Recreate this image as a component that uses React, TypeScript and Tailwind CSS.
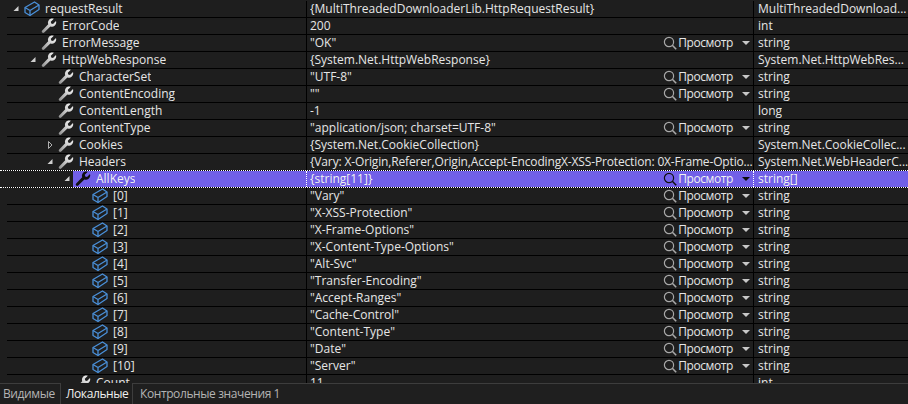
const FONT = "font-['Open_Sans','Noto_Sans',sans-serif]";

type Row = {
  name: string;
  value: string;
  type: string;
  depth: number;
  icon: "box" | "wrench";
  toggle?: "open" | "closed";
  view?: boolean;
  selected?: boolean;
  tight?: boolean;
};

const rows: Row[] = [
  { name: "requestResult", value: "{MultiThreadedDownloaderLib.HttpRequestResult}", type: "MultiThreadedDownload...", depth: 0, icon: "box", toggle: "open" },
  { name: "ErrorCode", value: "200", type: "int", depth: 1, icon: "wrench" },
  { name: "ErrorMessage", value: '"OK"', type: "string", depth: 1, icon: "wrench", view: true },
  { name: "HttpWebResponse", value: "{System.Net.HttpWebResponse}", type: "System.Net.HttpWebRes...", depth: 1, icon: "wrench", toggle: "open" },
  { name: "CharacterSet", value: '"UTF-8"', type: "string", depth: 2, icon: "wrench", view: true },
  { name: "ContentEncoding", value: '""', type: "string", depth: 2, icon: "wrench", view: true },
  { name: "ContentLength", value: "-1", type: "long", depth: 2, icon: "wrench" },
  { name: "ContentType", value: '"application/json; charset=UTF-8"', type: "string", depth: 2, icon: "wrench", view: true },
  { name: "Cookies", value: "{System.Net.CookieCollection}", type: "System.Net.CookieCollec...", depth: 2, icon: "wrench", toggle: "closed" },
  { name: "Headers", value: "{Vary: X-Origin,Referer,Origin,Accept-EncodingX-XSS-Protection: 0X-Frame-Optio...", type: "System.Net.WebHeaderC...", depth: 2, icon: "wrench", toggle: "open", tight: true },
  { name: "AllKeys", value: "{string[11]}", type: "string[]", depth: 3, icon: "wrench", toggle: "open", view: true, selected: true },
  { name: "[0]", value: '"Vary"', type: "string", depth: 4, icon: "box", view: true },
  { name: "[1]", value: '"X-XSS-Protection"', type: "string", depth: 4, icon: "box", view: true },
  { name: "[2]", value: '"X-Frame-Options"', type: "string", depth: 4, icon: "box", view: true },
  { name: "[3]", value: '"X-Content-Type-Options"', type: "string", depth: 4, icon: "box", view: true },
  { name: "[4]", value: '"Alt-Svc"', type: "string", depth: 4, icon: "box", view: true },
  { name: "[5]", value: '"Transfer-Encoding"', type: "string", depth: 4, icon: "box", view: true },
  { name: "[6]", value: '"Accept-Ranges"', type: "string", depth: 4, icon: "box", view: true },
  { name: "[7]", value: '"Cache-Control"', type: "string", depth: 4, icon: "box", view: true },
  { name: "[8]", value: '"Content-Type"', type: "string", depth: 4, icon: "box", view: true },
  { name: "[9]", value: '"Date"', type: "string", depth: 4, icon: "box", view: true },
  { name: "[10]", value: '"Server"', type: "string", depth: 4, icon: "box", view: true },
  { name: "Count", value: "11", type: "int", depth: 3, icon: "wrench" },
];

const depthPad = ["pl-[12px]", "pl-[29px]", "pl-[46px]", "pl-[63px]", "pl-[80px]"];

function BoxIcon() {
  return (
    <svg className="w-[16px] h-[16px] shrink-0" viewBox="0 0 16 16" fill="none" stroke="#4a90d9" strokeWidth="1.3" strokeLinejoin="round">
      <path d="M1 6.5 L10.5 1 L15 4 L15 8.5 L6 14.5 L1 11.5 Z" />
      <path d="M1 6.5 L6 9.5 L15 4 M6 9.5 L6 14.5" />
    </svg>
  );
}

function WrenchIcon({ dark }: { dark?: boolean }) {
  return (
    <svg className="w-[16px] h-[16px] shrink-0" viewBox="0 0 16 16" fill={dark ? "#111111" : "url(#wrench-fill)"}>
      <defs>
        <linearGradient id="wrench-fill" x1="0" y1="1" x2="1" y2="0">
          <stop offset="0" stopColor="#8c8c8c" />
          <stop offset="0.6" stopColor="#d8d8d8" />
          <stop offset="1" stopColor="#f0f0f0" />
        </linearGradient>
      </defs>
      <path d="M15 3 L12 6 L10.2 5.6 L9.8 3.8 L12.8 0.8 C10.8 0.2 8.6 0.8 7.6 2.4 C6.8 3.6 6.8 5 7.2 6.2 L1.2 12.6 C0.6 13.2 0.6 14 1.2 14.6 C1.8 15.2 2.6 15.2 3.2 14.6 L9.4 8.4 C10.8 9 12.4 8.8 13.6 7.8 C15 6.6 15.6 4.6 15 3 Z" />
    </svg>
  );
}

function Toggle({ kind }: { kind?: "open" | "closed" }) {
  if (!kind) return <span className="w-[10px] shrink-0" />;
  return (
    <svg className="w-[10px] h-[10px] shrink-0" viewBox="0 0 10 10">
      {kind === "open" ? (
        <path d="M6.5 2 L6.5 7 L1.5 7 Z" fill="#d0d0d0" />
      ) : (
        <path d="M2.5 1.5 L6 5 L2.5 8.5 Z" fill="none" stroke="#b0b0b0" strokeWidth="1" />
      )}
    </svg>
  );
}

function ViewButton({ dark }: { dark?: boolean }) {
  return (
    <span className="flex items-center shrink-0 mr-[3px]">
      <svg className="w-[14px] h-[14px]" viewBox="0 0 14 14" fill="none" stroke={dark ? "#111111" : "#a8a8a8"} strokeWidth="1.2">
        <circle cx="6" cy="6" r="4.6" />
        <path d="M9.3 9.3 L13.2 13.2" strokeWidth="1.6" />
      </svg>
      <span className="ml-[1px] tracking-[-0.4px]">Просмотр</span>
      <svg className="w-[8px] h-[4px] ml-[9px]" viewBox="0 0 8 4">
        <path d="M0 0 H8 L4 4 Z" fill={dark ? "#111111" : "#c8c8c8"} />
      </svg>
    </span>
  );
}

function DebugRow({ row }: { row: Row }) {
  const cell = row.selected ? "bg-[#7160e8]" : "bg-[#1e1e1e]";
  const divider = row.selected ? "border-white border-dotted" : "border-black";
  return (
    <div className={`relative h-[17px] shrink-0 flex text-[12px] leading-[16px] ${row.selected ? "text-[#f0f0f0]" : "text-[#e6e6e6]"}`}>
      <div className={`w-[306px] shrink-0 flex items-center h-[16px] ${depthPad[row.depth]} bg-[#1e1e1e]`}>
        <Toggle kind={row.toggle} />
        <div className={`flex flex-1 items-center h-[16px] ${cell}`}>
          <span className="ml-[2px]">{row.icon === "box" ? <BoxIcon /> : <WrenchIcon dark={row.selected} />}</span>
          <span className="ml-[5px] truncate">{row.name}</span>
        </div>
      </div>
      <div className={`w-[447px] shrink-0 h-[16px] flex items-center border-l ${divider} pl-[3px] ${cell}`}>
        <span className={`flex-1 whitespace-nowrap overflow-hidden ${row.tight ? "tracking-[-0.15px]" : ""}`}>{row.value}</span>
        {row.view && <ViewButton dark={row.selected} />}
      </div>
      <div className={`flex-1 h-[16px] flex items-center border-l ${divider} pl-[4px] ${cell}`}>
        <span className="truncate">{row.type}</span>
      </div>
      {/* bottom grid line, the gutter on the left stays clear */}
      <div className="absolute left-[7px] right-0 bottom-0 h-[1px] bg-black" />
      {row.selected && (
        <>
          <div className="absolute left-0 right-0 top-[-1px] h-[1px] border-t border-dotted border-white" />
          <div className="absolute left-0 right-0 bottom-0 h-[1px] border-t border-dotted border-white" />
        </>
      )}
    </div>
  );
}

export default function App() {
  return (
    <div className={`w-[908px] h-[404px] overflow-hidden bg-[#1e1e1e] flex flex-col ${FONT}`}>
      <div className="h-[383px] pt-[1px] overflow-hidden flex flex-col">
        {rows.map((row) => (
          <DebugRow key={row.name} row={row} />
        ))}
      </div>
      <div className="flex-1 flex items-start bg-[#1f1f1f] border-t border-[#3d3d3d] text-[12px] tracking-[-0.4px] text-[#b4b4b4]">
        <div className="w-[60px] h-[20px] pl-[3px] flex items-center">Видимые</div>
        <div className="w-[73px] h-[21px] mt-[-1px] pl-[5px] flex items-center bg-[#1e1e1e] text-[#f0f0f0] border-x border-[#3d3d3d]">Локальные</div>
        <div className="h-[20px] pl-[7px] flex items-center">Контрольные значения 1</div>
      </div>
    </div>
  );
}
